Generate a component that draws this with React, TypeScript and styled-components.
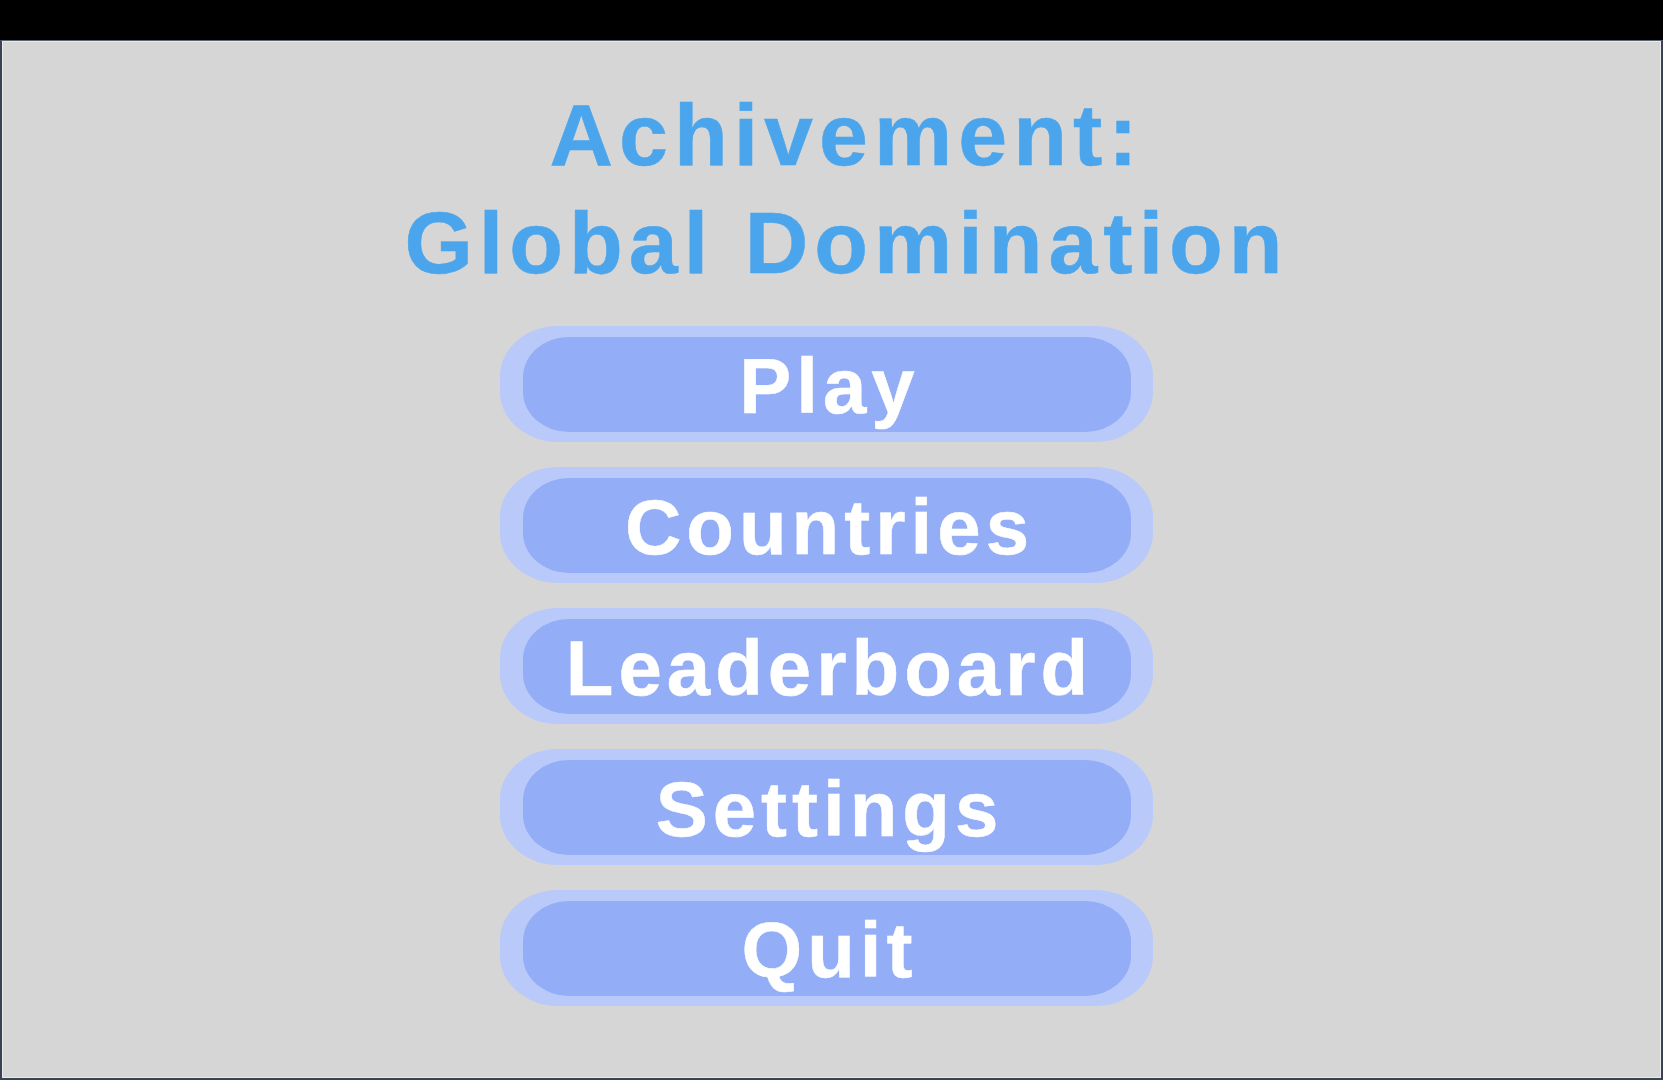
import styled, { createGlobalStyle } from "styled-components";

const GlobalStyle = createGlobalStyle`
  html, body {
    margin: 0;
    padding: 0;
    background: #000;
  }
  * {
    box-sizing: border-box;
  }
`;

const Screen = styled.div`
  width: 1663px;
  height: 1080px;
  padding-top: 40px;
  display: flex;
  flex-direction: column;
  background: #000;
`;

const Panel = styled.main`
  flex: 1;
  display: flex;
  flex-direction: column;
  align-items: center;
  padding-top: 40px;
  background: #d6d6d6;
  border: 2px solid #3a4254;
  border-top: 1px solid #5c6474;
  box-shadow: inset 1px 1px 0 #eaeaea, inset -1px -1px 0 #eaeaea;
  font-family: "Liberation Sans", Arial, sans-serif;
`;

const Title = styled.h1`
  margin: 0 0 29px;
  padding-left: 30px;
  font-size: 88px;
  line-height: 108px;
  font-weight: 700;
  letter-spacing: 6px;
  text-align: center;
  color: #4aa5ec;
  -webkit-text-stroke: 0.5px #4aa5ec;
`;

const Menu = styled.nav`
  display: flex;
  flex-direction: column;
  gap: 25px;
  margin-right: 10px;
`;

const MenuButton = styled.button`
  width: 653px;
  height: 116px;
  padding: 11px 22px 10px 23px;
  border: none;
  border-radius: 58px / 50px;
  background: #b9c9fa;
  cursor: pointer;
  font: inherit;
`;

const Face = styled.span`
  display: flex;
  align-items: center;
  justify-content: center;
  height: 100%;
  padding: 2px 0 0 5px;
  border-radius: 46px / 40px;
  background: #93adf6;
  color: #fff;
  font-size: 78px;
  line-height: 1;
  font-weight: 700;
  letter-spacing: 5px;
  -webkit-text-stroke: 0.5px #fff;
`;

const items = ["Play", "Countries", "Leaderboard", "Settings", "Quit"];

export default function App() {
  return (
    <Screen>
      <GlobalStyle />
      <Panel>
        <Title>
          Achivement:
          <br />
          Global Domination
        </Title>
        <Menu>
          {items.map((label) => (
            <MenuButton key={label}>
              <Face>{label}</Face>
            </MenuButton>
          ))}
        </Menu>
      </Panel>
    </Screen>
  );
}
